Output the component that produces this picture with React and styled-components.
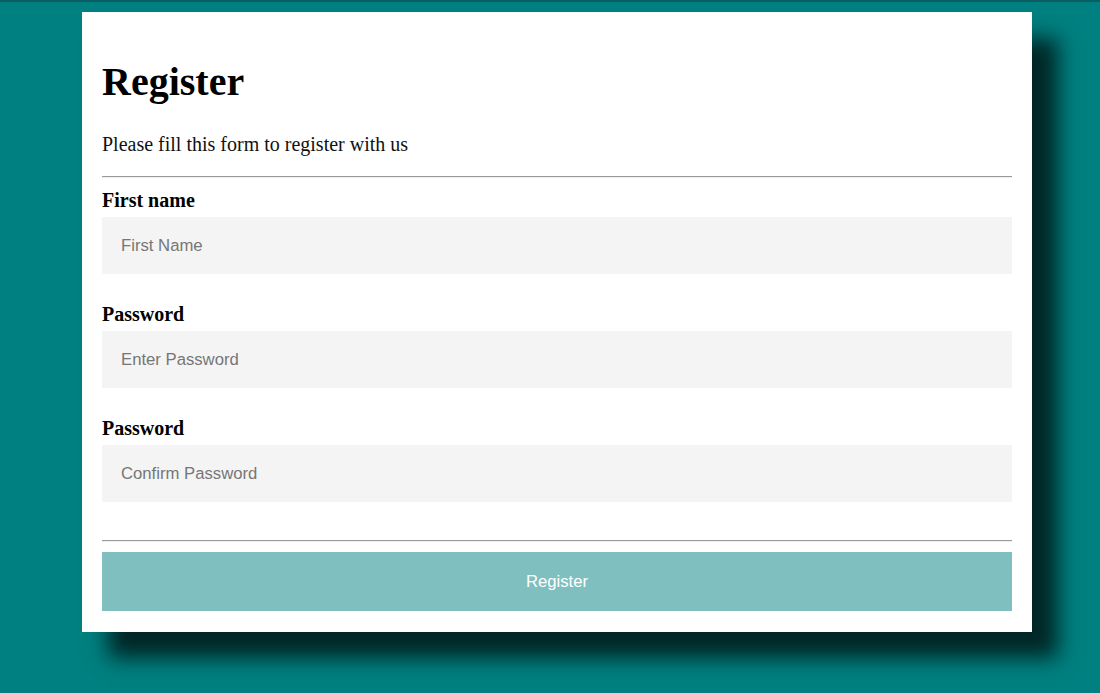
import styled, { createGlobalStyle } from "styled-components"

const GlobalStyle = createGlobalStyle`
    html, body {
        margin: 0;
        padding: 0;
    }
    body {
        background-color: #008080;
        border-top: 2px solid #0b5d61;
        min-height: 693px;
        box-sizing: border-box;
        font-family: "Liberation Serif", "Times New Roman", serif;
    }
`

const Card = styled.form`
    width: 950px;
    box-sizing: border-box;
    margin: 10px 0 0 82px;
    padding: 20px 20px 21px;
    background-color: #fff;
    box-shadow: 26px 26px 20px rgba(0, 0, 0, 0.7);
    display: flex;
    flex-direction: column;
`

const Title = styled.h1`
    font-size: 40px;
    line-height: 46px;
    font-weight: bold;
    margin: 27px 0 0;
    color: #000;
`

const Intro = styled.p`
    font-size: 20px;
    line-height: 23px;
    margin: 28px 0 0;
    color: #111;
`

const Divider = styled.hr`
    width: 100%;
    box-sizing: border-box;
    margin: ${(p) => p.$top}px 0 0;
    border: none;
    border-top: 1px solid #9a9a9a;
    border-bottom: 1px solid #eeeeee;
    height: 0;
`

const Field = styled.div`
    display: flex;
    flex-direction: column;
    margin-top: ${(p) => p.$top}px;
`

const Label = styled.label`
    font-size: 20px;
    line-height: 23px;
    font-weight: bold;
    color: #000;
`

const Input = styled.input`
    margin-top: 5px;
    height: 57px;
    box-sizing: border-box;
    padding: 0 19px;
    border: none;
    outline: none;
    background-color: #f4f4f4;
    font-family: "Liberation Sans", Arial, sans-serif;
    font-size: 16.7px;
    color: #333;

    &::placeholder {
        color: #767676;
    }
`

const Button = styled.button`
    margin-top: 10px;
    height: 59px;
    border: none;
    background-color: #80bfbf;
    color: #fff;
    font-family: "Liberation Sans", Arial, sans-serif;
    font-size: 16.7px;
    cursor: pointer;
`

export default function App() {
    return (
        <>
            <GlobalStyle />
            <Card onSubmit={(e) => e.preventDefault()}>
                <Title>Register</Title>
                <Intro>Please fill this form to register with us</Intro>
                <Divider $top={20} />
                <Field $top={11}>
                    <Label>First name</Label>
                    <Input type="text" placeholder="First Name" />
                </Field>
                <Field $top={29}>
                    <Label>Password</Label>
                    <Input type="password" placeholder="Enter Password" />
                </Field>
                <Field $top={29}>
                    <Label>Password</Label>
                    <Input type="password" placeholder="Confirm Password" />
                </Field>
                <Divider $top={38} />
                <Button type="submit">Register</Button>
            </Card>
        </>
    )
}
